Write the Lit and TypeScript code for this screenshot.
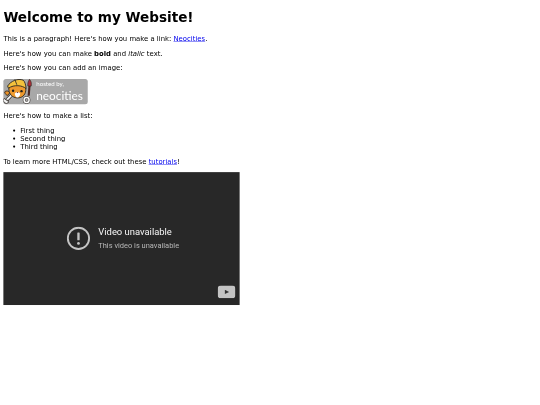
import { LitElement, html, css } from "lit";
import { customElement } from "lit/decorators.js";

@customElement("app-root")
export class AppRoot extends LitElement {
  static styles = css`
    :host { display: block; width: 540px; height: 405px; overflow: hidden; background: #fff; }
    .page { width: 1264px; padding: 0 8px; height: 960px; transform: scale(0.421875); transform-origin: 0 0; color: #000; font-family: "DejaVu Sans", sans-serif; font-size: 16.3px; line-height: 19px; display: flow-root; filter: blur(0.9px); }
    h1 { font-size: 32.2px; line-height: 39px; font-weight: 700; margin: 21.44px 0; }
    p { margin: 16px 0; }
    a { color: #0000ee; text-decoration: underline; }
    ul { margin: 16px 0; padding: 0 0 0 40px; }
    .badge { width: 200px; height: 60px; background: #a8a8a8; border-radius: 6px; display: flex; align-items: center; margin-bottom: 18px; }
    .badge svg { flex: none; width: 76px; height: 60px; display: block; }
    .badge-text { color: #fff; display: flex; flex-direction: column; font-family: Lato, sans-serif; font-weight: 400; padding-left: 2px; }
    .hosted { font-size: 14.5px; line-height: 17.5px; }
    .neo { font-size: 28px; line-height: 34px; }
    .video { width: 560px; height: 315px; background: #282828; position: relative; display: flex; align-items: center; font-family: Roboto, sans-serif; padding-left: 150px; box-sizing: border-box; gap: 19px; }
    .err { width: 56px; height: 56px; flex: none; display: block; }
    .vt { display: flex; flex-direction: column; gap: 7px; }
    .t1 { font-size: 22.3px; line-height: 26px; color: #f6f6f6; }
    .t2 { font-size: 17.7px; line-height: 24px; color: #b8b8b8; }
    .yt { position: absolute; right: 10px; bottom: 16px; width: 42px; height: 30px; display: block; }
  `;

  render() {
    return html`
      <div class="page">
        <h1>Welcome to my Website!</h1>
        <p>This is a paragraph! Here's how you make a link: <a href="#">Neocities</a>.</p>
        <p>Here's how you can make <strong>bold</strong> and <em>italic</em> text.</p>
        <p>Here's how you can add an image:</p>
        <div class="badge">
          <svg viewBox="0 0 76 60">
            <path d="M20 38 L8 50" stroke="#2f2a25" stroke-width="8"/>
            <path d="M20 38 L8 50" stroke="#f2f2f2" stroke-width="4.5"/>
            <path d="M2 46 a7 7 0 0 0 10 10 l-1 -5 -5 -1z" fill="#f2f2f2" stroke="#2f2a25" stroke-width="2"/>
            <path d="M3 31 C7 27 12 28 15 33 L11 39 C7 39 4 36 3 31Z" fill="#e9922a" stroke="#2f2a25" stroke-width="2"/>
            <path d="M13 26 C12 16 22 11 34 11 C47 11 54 18 53 28 C52 39 43 46 32 45 C21 44 14 36 13 26Z" fill="#ee9a2e" stroke="#2f2a25" stroke-width="2.2"/>
            <path d="M10 17 C17 5 35 -2 47 3 C51 6 53 14 54 23 C44 15 26 13 12 22Z" fill="#f4c23c" stroke="#2f2a25" stroke-width="2.2"/>
            <path d="M27 1 L32 14" stroke="#2f2a25" stroke-width="2"/>
            <path d="M27 35 C30 30 37 30 40 35 C39 41 36 44 33 44 C30 44 28 40 27 35Z" fill="#fff"/>
            <circle cx="23" cy="28" r="2.8" fill="#1c1c1c"/><circle cx="43" cy="29" r="2.8" fill="#1c1c1c"/>
            <path d="M31 31h5l-2.5 3z" fill="#6e2a20"/>
            <path d="M60 40 L62 16" stroke="#4a2620" stroke-width="5"/>
            <path d="M58 17 C57 11 59 5 62 1 C66 5 67 11 66 17Z" fill="#b0303a" stroke="#2f2a25" stroke-width="1.5"/>
            <circle cx="55" cy="50" r="6" fill="none" stroke="#2f2a25" stroke-width="6"/>
            <circle cx="55" cy="50" r="6" fill="none" stroke="#fff" stroke-width="3.5"/>
          </svg>
          <div class="badge-text"><span class="hosted">hosted by,</span><span class="neo">neocities</span></div>
        </div>
        <p>Here's how to make a list:</p>
        <ul><li>First thing</li><li>Second thing</li><li>Third thing</li></ul>
        <p>To learn more HTML/CSS, check out these <a href="#">tutorials</a>!</p>
        <div class="video">
          <svg class="err" viewBox="0 0 24 24"><circle cx="12" cy="12" r="10.8" fill="none" stroke="#c4c4c4" stroke-width="1.9"/><rect x="10.8" y="6" width="2.4" height="8" rx=".6" fill="#c4c4c4"/><circle cx="12" cy="17.2" r="1.4" fill="#c4c4c4"/></svg>
          <div class="vt"><div class="t1">Video unavailable</div><div class="t2">This video is unavailable</div></div>
          <svg class="yt" viewBox="0 0 42 30"><rect width="42" height="30" rx="8" fill="#c4c4c4"/><path d="M17 10l10 5-10 5z" fill="#333"/></svg>
        </div>
      </div>
    `;
  }
}
